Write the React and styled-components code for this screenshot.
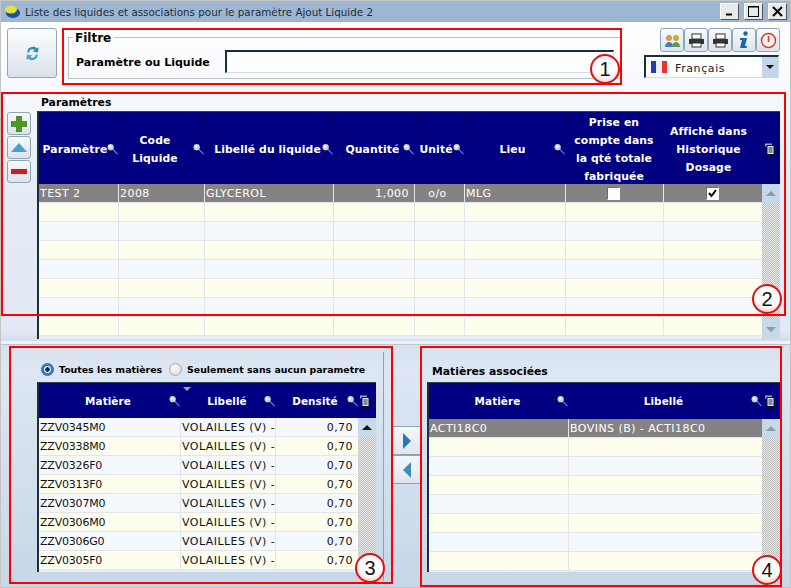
import React from "react";
import styled, { createGlobalStyle } from "styled-components";

const Global = createGlobalStyle`
  html, body { margin: 0; padding: 0; background: #c8d8e8; }
  * { box-sizing: border-box; }
`;
const FONT = `"DejaVu Sans", Verdana, sans-serif`;

const Page = styled.div`
  position: relative; width: 791px; height: 588px; overflow: hidden;
  font-family: ${FONT}; color: #000;
  border: 1px solid #c4c4c4;
  background: linear-gradient(#ffffff 0, #fbfcfe 60px, #e4ebf5 200px, #e2e9f4 330px, #c7d7e8 345px);
  display: flex; flex-direction: column;
`;
const TitleBar = styled.div`
  height: 21px; flex: none; background: #9db7d3; display: flex; align-items: center;
  padding: 0 3px 0 4px; gap: 5px; font-size: 10.35px; color: #1c2a3a;
`;
const TitleText = styled.span` flex: 1; white-space: nowrap; `;
const WinBtn = styled.button`
  width: 19px; height: 17px; padding: 0; background: #e9e9e9; border: 1px solid #fff;
  border-right-color: #555; border-bottom-color: #555; display: flex; align-items: center; justify-content: center;
`;
const TopRow = styled.div`
  height: 72px; flex: none; display: flex; padding: 6px 0 0 6px;
`;
const BigBtn = styled.button`
  width: 50px; height: 50px; flex: none; padding: 0; border: 1px solid #8fa7b5; border-radius: 3px;
  background: linear-gradient(#fbfcfd, #eef1f5 45%, #dbe2ee); display: flex; align-items: center; justify-content: center;
`;
const Fieldset = styled.div`
  position: relative; width: 554px; height: 42px; margin: 9px 0 0 11px; border: 1px solid #c0c0c0;
  display: flex; align-items: flex-start; padding: 12px 0 0 7px;
`;
const Legend = styled.span`
  position: absolute; left: 4px; top: -7px; background: #fdfdfe; padding: 0 3px 0 2px;
  font-size: 12px; line-height: 15px; font-weight: 700;
`;
const FilterLabel = styled.label`
  font-size: 11px; line-height: 25px; font-weight: 700; width: 149px; flex: none; white-space: nowrap;
`;
const FilterInput = styled.div`
  width: 389px; height: 23px; background: #fff;
  border: 1px solid #cfdfee; border-top: 2px solid #16303f; border-left: 2px solid #16303f;
`;
const Tools = styled.div`
  width: 136px; margin-left: 22px; flex: none; display: flex; flex-direction: column; align-items: flex-end;
`;
const ToolRow = styled.div` display: flex; margin-bottom: 3px; `;
const ToolBtn = styled.button`
  width: 24px; height: 24px; padding: 0; border: 1px solid #8fa7b5; border-radius: 3px;
  background: linear-gradient(#f8fafb, #dce4ee); display: flex; align-items: center; justify-content: center;
`;
const LangSelect = styled.div`
  width: 135px; height: 23px; margin-right: 1px; background: #fff; border: 1px solid #cfdfee; border-top: 2px solid #16303f; border-left: 2px solid #16303f;
  display: flex; align-items: center; font-size: 11px; letter-spacing: .6px; padding-left: 5px; gap: 8px; color: #222;
`;
const Flag = styled.span`
  width: 16px; height: 12px; flex: none; background: linear-gradient(90deg, #1c3fb0 33%, #eef 33%, #eef 66%, #f03030 66%);
`;
const LangName = styled.span` flex: 1; padding-top: 2px; `;
const LangArrow = styled.span`
  width: 16px; height: 21px; background: #c3d6e8; display: flex; align-items: center; justify-content: center;
  &::after { content: ""; border: 4px solid transparent; border-top: 4px solid #111; border-bottom: 0; }
`;
const ParamSection = styled.div`
  height: 250px; flex: none; display: flex; padding-left: 6px; border-bottom: 3px solid #eef2f7;
`;
const SideBtns = styled.div`
  width: 30px; flex: none; padding-top: 18px; display: flex; flex-direction: column; gap: 1px;
`;
const SmallBtn = styled.button`
  width: 24px; height: 23px; padding: 0; border: 1px solid #8fa7b5; border-radius: 3px;
  background: linear-gradient(#f8fafb, #dbe2ec); display: flex; align-items: center; justify-content: center;
`;
const ParamBody = styled.div` width: 743px; flex: none; `;
const GridTitle = styled.div`
  height: 17px; font-size: 10.8px; line-height: 18px; font-weight: 700; padding-left: 4px; white-space: nowrap;
`;
const TableWrap = styled.div`
  position: relative; flex: none; height: ${p => p.$h}px; display: grid; grid-template-columns: 1fr ${p => p.$sb}px;
  grid-template-rows: ${p => p.$hh}px minmax(0, 1fr); border-left: 2px solid #16303f; border-top: 1px solid #2c4252;
  background: #e8eef6; width: ${p => p.$w}px; margin-top: ${p => p.$mt ?? 0}px;
`;
const Head = styled.div`
  grid-column: 1 / 3; background: #000080; display: grid; grid-template-columns: ${p => p.$cols};
  color: #fff; font-weight: 700; font-size: ${p => p.$fs ?? 10.8}px; line-height: 18px; text-align: center; letter-spacing: .1px;
`;
const HeadCell = styled.div`
  position: relative; display: flex; align-items: center; justify-content: center; padding: ${p => p.$pt ?? 0}px ${p => p.$pad ?? 0}px 0 0;
`;
const Sizer = styled.span`
  position: absolute; left: 1px; top: 2px; width: 3px; height: 7px;
  &::before, &::after { content: ""; position: absolute; left: 0; border: 1.5px solid transparent; }
  &::before { top: -1px; border-bottom: 2px solid #111; border-top: 0; }
  &::after { bottom: -1px; border-top: 2px solid #111; border-bottom: 0; }
`;
const SortMark = styled.span`
  position: absolute; left: 3px; top: 4px; border: 4px solid transparent; border-top: 4px solid #a6a6a6; border-bottom: 0;
`;
const Lens = styled.svg`
  position: absolute; right: ${p => p.$r ?? 0}px; top: 50%; margin-top: -6px; width: 11px; height: 12px;
`;
const Rows = styled.div` overflow: hidden; `;
const Row = styled.div`
  height: 19px; display: grid; grid-template-columns: ${p => p.$cols};
  background: ${p => p.$sel ? "#858284" : p.$odd ? "#fdfeee" : "#f5f9fe"};
  color: ${p => p.$sel ? "#fff" : "#111"}; font-size: 11px; line-height: 18px; letter-spacing: .45px;
  border-bottom: 1px solid #e4e4ea;
`;
const Cell = styled.div`
  border-left: ${p => p.$first ? "0" : `1px solid ${p.$sel ? "#e6e6e6" : "#e4e4ea"}`};
  padding: 1px ${p => p.$pr ?? 1}px 0 1px; overflow: hidden; white-space: nowrap;
  letter-spacing: ${p => p.$tight ? "-.2px" : "inherit"};
  display: flex; align-items: center; justify-content: ${p => p.$center ? "center" : p.$right ? "flex-end" : "flex-start"};
`;
const Check = styled.span`
  width: 13px; height: 13px; background: #fff; border: 1px solid; border-color: #6c6c6c #fff #fff #6c6c6c;
  display: flex; align-items: center; justify-content: center;
`;
const Scroll = styled.div`
  display: flex; flex-direction: column; justify-content: space-between; background-color: #c9c9c9;
  background-image: repeating-conic-gradient(#bdbdbd 0 25%, #e9e9e9 0 50%); background-size: 2px 2px;
`;
const ScrollBtn = styled.div`
  height: 19px; flex: none; background: #c6d8e9; display: flex; align-items: center; justify-content: center;
  &::after {
    content: ""; border: 5px solid transparent;
    ${p => p.$down ? `border-top: 5px solid ${p.$c}; border-bottom: 0;` : `border-bottom: 5px solid ${p.$c}; border-top: 0;`}
  }
`;
const Bottom = styled.div`
  flex: 1; display: flex; position: relative; border-top: 1px solid #b6c6d6;
  background: linear-gradient(#d6e1ec, #dce6f3 20px, #dde6f2 30px, #c7d7e8 100%);
`;
const LeftPanel = styled.div`
  width: 383px; flex: none; padding: 15px 0 0 36px; position: relative;
  &::after { content: ""; position: absolute; right: 0; top: 7px; bottom: 6px; width: 1px; background: #9aa0a8; }
`;
const Radios = styled.div`
  height: 18px; display: flex; align-items: center; font-size: 9.4px; font-weight: 700; white-space: nowrap; padding-left: 4px;
`;
const Radio = styled.span`
  width: 13px; height: 13px; border-radius: 50%; flex: none; margin-right: 5px;
  background: ${p => p.$on ? "radial-gradient(circle, #03306e 0 2px, #fff 2.5px 3px, #2a6fc4 4px, #7fb0e4)" : "radial-gradient(circle at 40% 40%, #fff, #cfcfcf)"};
  border: 1px solid ${p => p.$on ? "#2f64a5" : "#aaa"};
`;
const RadioLabel = styled.span` margin-right: 7px; `;
const Mid = styled.div`
  width: 27px; margin-left: 9px; flex: none; padding-top: 81px; display: flex; flex-direction: column;
`;
const MidBtn = styled.button`
  height: 29px; width: 27px; padding: 0; border: 0; border-top: 1px solid #8aa3b6; border-bottom: 1px solid #8aa3b6;
  background: linear-gradient(#f4f7fa, #dfe6ef); display: flex; align-items: center; justify-content: center;
  &::after { content: ""; border: 8px solid transparent;
    ${p => p.$left ? "border-right: 8px solid #3f8db8; border-left: 0;" : "border-left: 8px solid #2a79aa; border-right: 0;"} }
`;
const RightPanel = styled.div` flex: 1; padding: 16px 0 0 7px; `;
const RightTitle = styled.div`
  height: 21px; font-size: 10.8px; line-height: 22px; font-weight: 700; padding-left: 5px; white-space: nowrap;
`;
const Annot = styled.div`
  position: absolute; left: ${p => p.$x}px; top: ${p => p.$y}px; width: ${p => p.$w}px; height: ${p => p.$h}px;
  border: 2px solid #ff0000; pointer-events: none;
`;
const Badge = styled.div`
  position: absolute; right: ${p => p.$r}px; bottom: ${p => p.$b}px; width: 30px; height: 30px; border-radius: 50%;
  border: 2px solid #e01010; background: radial-gradient(circle at 50% 35%, #fff 55%, #f3b6a8 95%);
  font: 20px/26px "Liberation Sans", Arial, sans-serif; text-align: center; color: #111;
`;

const LensIcon = ({ r }) => (
  <Lens $r={r} viewBox="0 0 12 12">
    <line x1="6" y1="6" x2="11.500" y2="11.500" stroke="#5a7cff" strokeWidth="1.2" />
    <circle cx="4" cy="4" r="3.4" fill="#d0d0d0" />
    <circle cx="3.4" cy="3.4" r="1.3" fill="#fff" />
  </Lens>
);
const ColIcon = ({ r = 5 }) => (
  <Lens $r={r} viewBox="0 0 10 12">
    <rect x="0.5" y="0.5" width="7" height="3" fill="#8fa3e0" />
    <rect x="2.5" y="2.5" width="7" height="9" fill="#dfe6ff" stroke="#111" />
    <path d="M4 5h4M4 7h4M4 9h4" stroke="#223" />
  </Lens>
);

const paramCols = "79px 86px 129px 81px 50px 101px 98px 99px";

const Param = () => {
  const heads = [
    ["Paramètre", 7], [<>Code<br />Liquide</>, 12], ["Libellé du liquide", 2], ["Quantité", 2],
    ["Unité", 6], ["Lieu", 4],
  ];
  return (
    <TableWrap $w={743} $h={228} $sb={18} $hh={72}>
      <Head $cols="79px 86px 129px 81px 50px 101px 98px 117px">
        {heads.map((h, i) => (
          <HeadCell key={i} $pad={h[1]} $pt={2}>
            <Sizer /><span>{h[0]}</span><LensIcon r={0} />
          </HeadCell>
        ))}
        <HeadCell $pt={2}><Sizer /><span>Prise en<br />compte dans<br />la qté totale<br />fabriquée</span></HeadCell>
        <HeadCell $pad={26} $pt={2}><Sizer /><span>Affiché dans<br />Historique<br />Dosage</span><ColIcon /></HeadCell>
      </Head>
      <Rows>
        <Row $cols={paramCols} $sel>
          <Cell $first $sel>TEST 2</Cell><Cell $sel>2008</Cell><Cell $sel>GLYCEROL</Cell>
          <Cell $sel $right $pr={5}>1,000</Cell><Cell $sel $center $pr={5}>o/o</Cell><Cell $sel>MLG</Cell>
          <Cell $sel $center $pr={4}><Check /></Cell>
          <Cell $sel $center $pr={2}><Check><svg width="9" height="9" viewBox="0 0 9 9"><path d="M1 4l2.500 3L8 1" fill="none" stroke="#000" strokeWidth="2" /></svg></Check></Cell>
        </Row>
        {[1, 2, 3, 4, 5, 6, 7].map(i => (
          <Row key={i} $cols={paramCols} $odd={i % 2 === 1}>
            {[0, 1, 2, 3, 4, 5, 6, 7].map(j => <Cell key={j} $first={j === 0} />)}
          </Row>
        ))}
      </Rows>
      <Scroll><ScrollBtn $c="#8d9aa8" /><ScrollBtn $c="#8d9aa8" $down /></Scroll>
    </TableWrap>
  );
};

const codes = ["ZZV0345M0", "ZZV0338M0", "ZZV0326F0", "ZZV0313F0", "ZZV0307M0", "ZZV0306M0", "ZZV0306G0", "ZZV0305F0"];
const matCols = "141px 95px 83px";
const assocCols = "139px 194px";

export default function App() {
  return (
    <Page>
      <Global />
      <TitleBar>
        <svg width="15" height="13" viewBox="0 0 15 13">
          <ellipse cx="8" cy="8" rx="7" ry="5" fill="#1d4f9c" />
          <ellipse cx="6" cy="4.5" rx="6" ry="4" fill="#dde23a" />
        </svg>
        <TitleText>Liste des liquides et associations pour le paramètre Ajout Liquide 2</TitleText>
        <WinBtn><svg width="9" height="9"><path d="M1 7.500h6" stroke="#000" strokeWidth="2" /></svg></WinBtn>
        <WinBtn><svg width="11" height="11"><rect x="0.5" y="0.5" width="10" height="10" fill="none" stroke="#000" /><path d="M0 1h11" stroke="#000" /></svg></WinBtn>
        <WinBtn><svg width="11" height="11"><path d="M1 1l9 9M10 1l-9 9" stroke="#000" strokeWidth="2" /></svg></WinBtn>
      </TitleBar>
      <TopRow>
        <BigBtn>
          <svg width="15" height="19" viewBox="0 0 14 18">
            <path d="M2 8C2 3 8 1 11 4l2-1-1 5-5-1 2-1C7 4 4 5 4 8z" fill="#2d8fc0" />
            <path d="M12 10c0 5-6 7-9 4l-2 1 1-5 5 1-2 1c2 2 5 1 5-2z" fill="#49a6cf" />
          </svg>
        </BigBtn>
        <Fieldset>
          <Legend>Filtre</Legend>
          <FilterLabel>Paramètre ou Liquide</FilterLabel>
          <FilterInput />
        </Fieldset>
        <Tools>
          <ToolRow>
            <ToolBtn><svg width="17" height="15" viewBox="0 0 17 15"><circle cx="5" cy="5" r="3" fill="#d49a50" /><circle cx="12" cy="5" r="3" fill="#c9a93a" /><path d="M1 14c0-4 3-5 4-5s4 1 4 5z" fill="#4f79b0" /><path d="M8 14c0-4 3-5 4-5s4 1 4 5z" fill="#5c9a5c" /></svg></ToolBtn>
            {[0, 1].map(k => (
              <ToolBtn key={k}><svg width="17" height="15" viewBox="0 0 17 15"><rect x="4" y="1" width="9" height="5" fill="#fff" stroke="#333" /><rect x="1" y="6" width="15" height="5" fill="#333" /><rect x="4" y="10" width="9" height="4" fill="#fff" stroke="#333" /></svg></ToolBtn>
            ))}
            <ToolBtn><svg width="12" height="18" viewBox="0 0 12 18"><circle cx="7.5" cy="2.500" r="2.200" fill="#1868a8" /><path d="M2 7h7l-2 8h2l-.5 2H2l2-8H2z" fill="#1868a8" /></svg></ToolBtn>
            <ToolBtn><svg width="17" height="17" viewBox="0 0 17 17"><circle cx="8.5" cy="8.500" r="7" fill="#fdf4f2" stroke="#d83a30" strokeWidth="1.5" /><path d="M8.500 4v6" stroke="#d83a30" strokeWidth="1.6" /></svg></ToolBtn>
          </ToolRow>
          <LangSelect><Flag /><LangName>Français</LangName><LangArrow /></LangSelect>
        </Tools>
      </TopRow>
      <ParamSection>
        <SideBtns>
          <SmallBtn><svg width="16" height="16" viewBox="0 0 16 16"><path d="M5.500 0h5v5.500H16v5h-5.500V16h-5v-5.500H0v-5h5.500z" fill="#4e9a1c" stroke="#2c6a10" strokeWidth=".6" /></svg></SmallBtn>
          <SmallBtn><svg width="16" height="9" viewBox="0 0 16 9"><path d="M8 0l8 9H0z" fill="#4a9fcc" /></svg></SmallBtn>
          <SmallBtn><svg width="16" height="5" viewBox="0 0 16 5"><rect width="16" height="5" fill="#d81818" /></svg></SmallBtn>
        </SideBtns>
        <ParamBody>
          <GridTitle>Paramètres</GridTitle>
          <Param />
        </ParamBody>
      </ParamSection>
      <Bottom>
        <LeftPanel>
          <Radios>
            <Radio $on /><RadioLabel>Toutes les matières</RadioLabel>
            <Radio /><span>Seulement sans aucun parametre</span>
          </Radios>
          <TableWrap $w={339} $h={190} $sb={18} $hh={35} $mt={4}>
            <Head $cols="141px 95px 101px" $fs={10.4}>
              <HeadCell $pad={3}><Sizer />Matière<LensIcon r={0} /></HeadCell>
              <HeadCell $pad={1}><SortMark />Libellé<LensIcon r={0} /></HeadCell>
              <HeadCell $pad={21}><Sizer />Densité<LensIcon r={18} /><ColIcon r={6} /></HeadCell>
            </Head>
            <Rows>
              {codes.map((c, i) => (
                <Row key={c} $cols={matCols} $odd={i % 2 === 1}>
                  <Cell $first $tight>{c}</Cell><Cell>VOLAILLES (V) -</Cell><Cell $right $pr={5}>0,70</Cell>
                </Row>
              ))}
            </Rows>
            <Scroll><ScrollBtn $c="#111" /></Scroll>
          </TableWrap>
        </LeftPanel>
        <Mid>
          <MidBtn aria-label="Ajouter" />
          <MidBtn aria-label="Retirer" $left />
        </Mid>
        <RightPanel>
          <RightTitle>Matières associées</RightTitle>
          <TableWrap $w={353} $h={190} $sb={18} $hh={36}>
            <Head $cols="139px 212px" $fs={10.4}>
              <HeadCell $pad={2}><Sizer />Matière<LensIcon r={0} /></HeadCell>
              <HeadCell $pad={21}><Sizer />Libellé<LensIcon r={18} /><ColIcon r={5} /></HeadCell>
            </Head>
            <Rows>
              <Row $cols={assocCols} $sel><Cell $first $sel>ACTI18C0</Cell><Cell $sel>BOVINS (B) - ACTI18C0</Cell></Row>
              {[1, 2, 3, 4, 5, 6, 7].map(i => (
                <Row key={i} $cols={assocCols} $odd={i % 2 === 1}><Cell $first /><Cell /></Row>
              ))}
            </Rows>
            <Scroll><ScrollBtn $c="#8d9aa8" /></Scroll>
          </TableWrap>
        </RightPanel>
      </Bottom>

      <Annot $x={61} $y={27} $w={560} $h={57}><Badge $r={0} $b={-1}>1</Badge></Annot>
      <Annot $x={0} $y={91} $w={785} $h={224}><Badge $r={2} $b={0}>2</Badge></Annot>
      <Annot $x={8} $y={345} $w={384} $h={238}><Badge $r={6} $b={-1}>3</Badge></Annot>
      <Annot $x={419} $y={345} $w={362} $h={241}><Badge $r={-2} $b={0}>4</Badge></Annot>
    </Page>
  );
}
